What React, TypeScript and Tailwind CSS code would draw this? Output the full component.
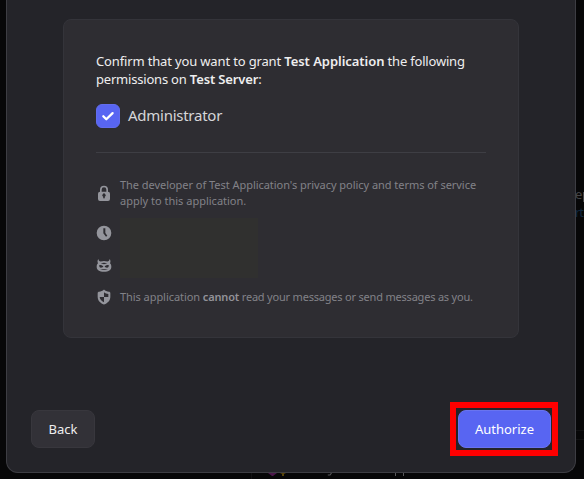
import type { ReactNode } from "react";

function Row({ icon, children }: { icon: ReactNode; children?: ReactNode }) {
  return (
    <div className="flex items-center gap-2">
      <svg viewBox="0 0 24 24" className="h-4 w-4 shrink-0 fill-[#94959c]">
        {icon}
      </svg>
      {children}
    </div>
  );
}

function Backdrop() {
  return (
    <div aria-hidden="true" className="absolute inset-0 text-[13px] leading-4">
      <div className="absolute top-[186px] left-[575px] text-[#454547]">e</div>
      <div className="absolute top-[192px] left-[583px] h-[10px] w-px bg-[#454547]" />
      <div className="absolute top-[204px] left-[575px] whitespace-nowrap text-[#10283f] tracking-[-1px]">rt</div>
      <div className="absolute top-[430px] right-0 h-[10px] w-2 border-y border-[#111112]" />
      <div className="absolute top-[473px] left-[251px] h-[6px] w-px bg-[#121214]" />
      <svg viewBox="0 0 20 5" className="absolute top-[472px] left-[268px] h-[5px] w-5">
        <path d="M0 1h9L5 4H4z" fill="#4c174b" />
        <path d="M12 1h6l-2 1v2h-2V2z" fill="#58440b" />
      </svg>
      <svg viewBox="0 0 70 5" className="absolute top-[472px] left-[327px] h-[5px] w-[70px] fill-none stroke-[#59595b] stroke-[1.2]">
        <path d="M4.5 1 3 3H.8" />
      </svg>
      <div className="absolute top-[473px] left-[395px] h-[3px] w-px bg-[#59595b]" />
      <div className="absolute top-[473px] left-[403px] h-[3px] w-px bg-[#59595b]" />
    </div>
  );
}

export default function App() {
  return (
    <div className="relative h-[479px] w-[584px] overflow-hidden bg-[#070708] font-['Noto_Sans',sans-serif]">
      <Backdrop />
      <main className="relative ml-[6px] flex h-[473px] w-[570px] flex-col rounded-b-xl border border-t-0 border-[#3d3d43] bg-[#242429] px-6">
        <section className="mt-[19px] ml-8 h-[319px] w-[456px] rounded-lg border border-[#34343a] bg-[#2e2d32] px-8 pt-8 text-[#eeeeef]">
          <p className="text-[13px] leading-[18px] whitespace-nowrap">
            <span className="tracking-[-0.15px]">Confirm that you want to grant </span>
            <strong className="font-semibold tracking-[-0.05px]">Test Application</strong>
            <span className="tracking-[-0.2px]"> the following</span>
            <br />
            <span className="tracking-[-0.2px]">permissions on </span>
            <strong className="font-semibold tracking-[-0.13px]">Test Server</strong>:
          </p>
          <div className="mt-4 flex h-6 items-center gap-2">
            <span className="flex h-6 w-6 items-center justify-center rounded-md border border-[#626dee] bg-[#5865f2]">
              <svg viewBox="0 0 16 16" className="h-4 w-4 fill-none stroke-white stroke-[2.3]">
                <path d="m3.3 8.3 3 3 6.3-6.2" strokeLinecap="round" strokeLinejoin="round" />
              </svg>
            </span>
            <span className="-mt-0.5 text-[15px] leading-6 tracking-[-0.26px] text-[#d6d6d9]">Administrator</span>
          </div>
          <div className="mt-6 w-[390px] border-t border-[#3e3e44]" />
          <div className="mt-6 flex flex-col text-[11px] leading-4 whitespace-nowrap text-[#828288]">
            <Row icon={<path fillRule="evenodd" d="M6 10V7a6 6 0 0 1 12 0v3a3 3 0 0 1 3 3v8a3 3 0 0 1-3 3H6a3 3 0 0 1-3-3v-8a3 3 0 0 1 3-3Zm2.500 0h7V7a3.500 3.500 0 0 0-7 0Zm4.700 7.500a2.500 2.500 0 1 0-2.400 0V19a1.200 1.200 0 0 0 2.400 0Z" />}>
              <div>
                <span className="tracking-[-0.04px]">The developer of Test Application's privacy policy and terms of service</span>
                <br />
                apply to this application.
              </div>
            </Row>
            <div className="relative mt-2 flex h-[72px] flex-col gap-4 pt-2">
              <Row icon={<path fillRule="evenodd" d="M12 1a11 11 0 1 1 0 22 11 11 0 0 1 0-22Zm-1 4v7.500l4 5 2-1.200-3-4.300V5Z" />} />
              <Row icon={<path fillRule="evenodd" d="M3.500 3C2 5 2 7.500 3 9.500 1.500 11 1 12.500 1 14.500 1 19.500 5 22 12 22s11-2.500 11-7.500c0-2-.5-3.500-2-5 1-2 1-4.500-.5-6.500-.3 2-1.500 3.300-3.500 3.800a18 18 0 0 0-10 0C5 6.300 3.800 5 3.500 3ZM5 12c2.500 0 4.500.7 6 2-.5 1.500-1.700 2-3.500 2C5.500 16 4.500 14.500 5 12Zm14 0c-2.500 0-4.500.7-6 2 .5 1.500 1.700 2 3.500 2 2 0 3-1.500 2.500-4ZM7 9.500c3-1 7-1 10 0l-5 1.300ZM6 18.300h12c-3 1.600-9 1.600-12 0Z" />} />
              <div className="absolute top-px left-6 h-[60px] w-[138px] bg-[#30302f]" />
            </div>
            <Row icon={<path fillRule="evenodd" d="M12 .8c2 2 4.500 3.200 7.500 3.200 1 0 2 1 2 2v5.500c0 5.500-3.500 9.200-9.500 11.800-6-2.600-9.500-6.300-9.500-11.800V6c0-1 1-2 2-2 3 0 5.500-1.200 7.500-3.200ZM12 5v7h6.500V7.500C16 7.300 14 6.500 12 5Zm0 7H5.500c.4 3.500 2.700 6 6.500 7.800Z" />}>
              <div className="tracking-[-0.16px]">
                <span className="tracking-[-0.06px]">This application </span><strong className="font-semibold text-[#929298] tracking-[-0.16px]">cannot</strong><span className="tracking-[-0.2px]"> read your messages or send messages as you.</span>
              </div>
            </Row>
          </div>
        </section>
        <footer className="mt-[64px] flex h-[54px] items-center justify-between">
          <button className="h-[38px] w-16 rounded-lg border border-[#38373d] bg-[#323137] pt-0.5 text-[13px] text-[#eeeeef]">
            Back
          </button>
          <div className="-mr-[7px] flex h-[54px] w-[108px] items-center justify-center border-[6px] border-[#fe0000]">
            <button className="ml-px h-[38px] w-[93px] rounded-lg border border-[#6974ef] bg-[#5865f2] pt-0.5 text-[13px] text-white">
              Authorize
            </button>
          </div>
        </footer>
      </main>
    </div>
  );
}
